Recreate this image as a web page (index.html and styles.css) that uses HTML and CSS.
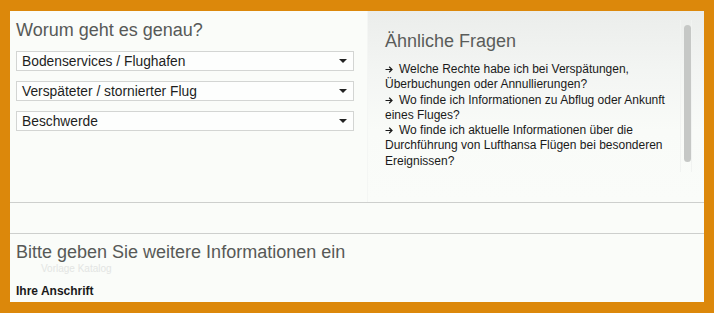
FILE: index.html
```html
<!DOCTYPE html>
<html lang="de">
<head>
<meta charset="utf-8">
<title>Kontakt</title>
<link rel="stylesheet" href="styles.css">
</head>
<body>
<div class="frame">
  <div class="top">
    <div class="left">
      <h2 class="title">Worum geht es genau?</h2>
      <div class="select"><span>Bodenservices / Flughafen</span><i class="arrow"></i></div>
      <div class="select"><span>Verspäteter / stornierter Flug</span><i class="arrow"></i></div>
      <div class="select"><span>Beschwerde</span><i class="arrow"></i></div>
    </div>
    <div class="right">
      <div class="content">
        <h2 class="heading">Ähnliche Fragen</h2>
        <ul class="faq">
          <li><svg class="go" viewBox="0 0 8 7" width="8" height="7"><path d="M0.5 3.5H7M4.2 0.8L7 3.5L4.2 6.2" fill="none" stroke="#1a1a1a" stroke-width="1.2"/></svg>Welche Rechte habe ich bei Verspätungen, Überbuchungen oder Annullierungen?</li>
          <li><svg class="go" viewBox="0 0 8 7" width="8" height="7"><path d="M0.5 3.5H7M4.2 0.8L7 3.5L4.2 6.2" fill="none" stroke="#1a1a1a" stroke-width="1.2"/></svg>Wo finde ich Informationen zu Abflug oder Ankunft eines Fluges?</li>
          <li><svg class="go" viewBox="0 0 8 7" width="8" height="7"><path d="M0.5 3.5H7M4.2 0.8L7 3.5L4.2 6.2" fill="none" stroke="#1a1a1a" stroke-width="1.2"/></svg>Wo finde ich aktuelle Informationen über die Durchführung von Lufthansa Flügen bei besonderen Ereignissen?</li>
        </ul>
      </div>
      <div class="track"><div class="thumb"></div></div>
    </div>
  </div>
  <div class="rule"></div>
  <div class="gap"></div>
  <div class="rule"></div>
  <div class="bottom">
    <h2 class="title">Bitte geben Sie weitere Informationen ein</h2>
    <div class="watermark">Vorlage Katalog</div>
    <div class="label">Ihre Anschrift</div>
  </div>
</div>
</body>
</html>
```
FILE: styles.css
```css
html, body {
  margin: 0;
  padding: 0;
}
body {
  background: #dc880b;
  font-family: "Liberation Sans", Arial, sans-serif;
  width: 714px;
  height: 313px;
  overflow: hidden;
}
.frame {
  margin: 11px 10px 0 10px;
  width: 694px;
  height: 291px;
  background: #fafcf9;
  display: flex;
  flex-direction: column;
}
.top {
  display: grid;
  grid-template-columns: 357px 1fr;
  height: 191px;
}
.left {
  padding: 8px 0 0 6px;
}
.title {
  margin: 0 0 10px 0;
  font-size: 18px;
  line-height: 22px;
  font-weight: normal;
  color: #575957;
}
.select {
  box-sizing: border-box;
  width: 338px;
  height: 20px;
  margin-bottom: 10px;
  border: 1px solid #d3d5d3;
  background: #fdfefd;
  display: flex;
  align-items: center;
  justify-content: space-between;
  padding: 0 6px 0 5px;
  font-size: 13.8px;
  color: #1e1e1e;
}
.arrow {
  width: 0;
  height: 0;
  border-left: 4px solid transparent;
  border-right: 4px solid transparent;
  border-top: 4px solid #222;
}
.right {
  display: flex;
  background: linear-gradient(#ebedeb 0px, #f3f5f3 60px, #f9fbf8 120px, #fafcf9 191px);
  border-left: 1px solid #f4f6f4;
}
.content {
  flex: 1;
  padding: 19px 0 0 17px;
}
.heading {
  margin: 0 0 10px 0;
  font-size: 18px;
  line-height: 22px;
  font-weight: normal;
  color: #5a5c5a;
}
.faq {
  list-style: none;
  margin: 0;
  padding: 0;
  width: 292px;
  font-size: 12px;
  line-height: 15.3px;
  color: #1a1a1a;
}
.go {
  display: inline-block;
  vertical-align: 0;
  margin: 0 6px 0 0;
}
.track {
  box-sizing: border-box;
  width: 12px;
  height: 152px;
  margin: 9px 12px 0 0;
  padding: 5px 0 0 3px;
  border-left: 1px solid #f1f3f1;
  border-right: 1px solid #f1f3f1;
}
.thumb {
  width: 7px;
  height: 137px;
  border-radius: 4px;
  background: #c6c8c6;
}
.rule {
  height: 1px;
  background: #cdcfcd;
}
.gap {
  height: 30px;
}
.bottom {
  padding: 7px 0 0 6px;
}
.bottom .title {
  margin: 0;
}
.watermark {
  margin-left: 25px;
  font-size: 10px;
  line-height: 12px;
  color: #e3e5e3;
}
.label {
  margin-top: 9px;
  font-size: 12px;
  line-height: 14px;
  font-weight: bold;
  color: #1a1a1a;
}
```
